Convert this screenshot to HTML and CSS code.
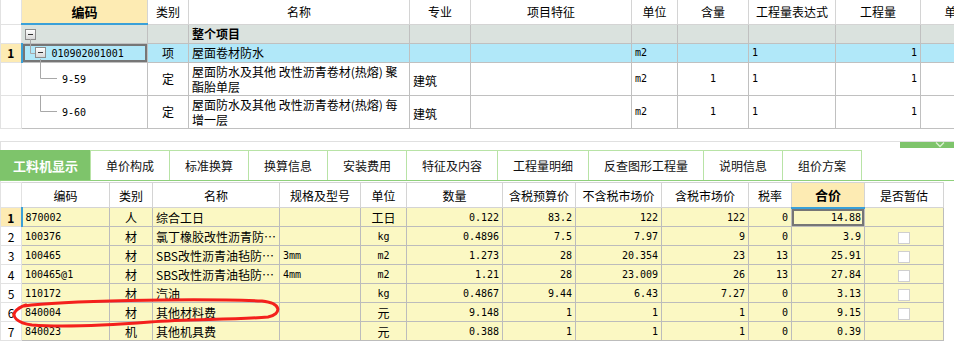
FILE: index.html
```html
<!DOCTYPE html>
<html lang="zh-CN">
  <head>
    <meta charset="UTF-8" />
    <meta name="viewport" content="width=device-width, initial-scale=1.0" />
    <title>分部分项</title>
    <link rel="stylesheet" href="styles.css">
  </head>

  <body>
    <section class="tree-grid">
      <table class="grid grid-top">
        <colgroup>
          <col style="width:21px" /><col style="width:126px" /><col style="width:41px" />
          <col style="width:221px" /><col style="width:61px" /><col style="width:161px" />
          <col style="width:46px" /><col style="width:71px" /><col style="width:87px" />
          <col style="width:85px" /><col style="width:60px" />
        </colgroup>
        <thead>
          <tr>
            <th class="num"></th>
            <th class="sorted">编码</th>
            <th>类别</th>
            <th>名称</th>
            <th>专业</th>
            <th>项目特征</th>
            <th>单位</th>
            <th>含量</th>
            <th>工程量表达式</th>
            <th>工程量</th>
            <th>单</th>
          </tr>
        </thead>
        <tbody>
          <tr class="row-group">
            <td class="num"></td>
            <td class="code lvl-0"><span class="toggle"></span></td>
            <td></td>
            <td class="bold">整个项目</td>
            <td></td><td></td><td></td><td></td><td></td><td></td><td></td>
          </tr>
          <tr class="row-item">
            <td class="num current">1</td>
            <td class="code lvl-1 picked"><span class="toggle"></span><span class="mono">010902001001</span></td>
            <td class="c">项</td>
            <td>屋面卷材防水</td>
            <td></td>
            <td></td>
            <td class="mono">m2</td>
            <td></td>
            <td class="mono">1</td>
            <td class="mono r">1</td>
            <td></td>
          </tr>
          <tr class="row-tall">
            <td class="num"></td>
            <td class="code lvl-2"><span class="mono">9-59</span></td>
            <td class="c">定</td>
            <td>屋面防水及其他 改性沥青卷材(热熔) 聚酯胎单层</td>
            <td class="low">建筑</td>
            <td></td>
            <td class="mono">m2</td>
            <td class="mono c">1</td>
            <td class="mono">1</td>
            <td class="mono r">1</td>
            <td></td>
          </tr>
          <tr class="row-tall">
            <td class="num"></td>
            <td class="code lvl-2"><span class="mono">9-60</span></td>
            <td class="c">定</td>
            <td>屋面防水及其他 改性沥青卷材(热熔) 每增一层</td>
            <td class="low">建筑</td>
            <td></td>
            <td class="mono">m2</td>
            <td class="mono c">1</td>
            <td class="mono">1</td>
            <td class="mono r">1</td>
            <td></td>
          </tr>
        </tbody>
      </table>
      <svg class="tree-lines" width="80" height="130" viewBox="0 0 80 130">
        <path d="M30.5 39 V53.5 H35 M40.5 59 V78.5 H57 M40.5 95 V111.5 H57" fill="none" stroke="#a8a8a8" stroke-width="1" />
      </svg>
    </section>

    <section class="panel">
      <div class="panel-bar">
        <span class="fold">
          <svg width="12" height="6" viewBox="0 0 12 6"><path d="M2 0.5 L6 4.5 L10 0.5" fill="none" stroke="#d9f0cf" stroke-width="1.4" /></svg>
        </span>
      </div>
      <nav class="tabs">
        <a class="tab active" style="width:91px">工料机显示</a>
        <a class="tab" style="width:80px">单价构成</a>
        <a class="tab" style="width:80px">标准换算</a>
        <a class="tab" style="width:80px">换算信息</a>
        <a class="tab" style="width:80px">安装费用</a>
        <a class="tab" style="width:92px">特征及内容</a>
        <a class="tab" style="width:92px">工程量明细</a>
        <a class="tab" style="width:116px">反查图形工程量</a>
        <a class="tab" style="width:80px">说明信息</a>
        <a class="tab" style="width:80px">组价方案</a>
      </nav>

      <div class="detail-wrap">
        <table class="grid grid-detail">
          <colgroup>
            <col style="width:21px" /><col style="width:88px" /><col style="width:43px" />
            <col style="width:127px" /><col style="width:81px" /><col style="width:46px" />
            <col style="width:96px" /><col style="width:73px" /><col style="width:86px" />
            <col style="width:87px" /><col style="width:43px" /><col style="width:73px" />
            <col style="width:79px" />
          </colgroup>
          <thead>
            <tr>
              <th class="num"></th>
              <th>编码</th>
              <th>类别</th>
              <th>名称</th>
              <th>规格及型号</th>
              <th>单位</th>
              <th>数量</th>
              <th>含税预算价</th>
              <th>不含税市场价</th>
              <th>含税市场价</th>
              <th>税率</th>
              <th class="sorted">合价</th>
              <th>是否暂估</th>
            </tr>
          </thead>
          <tbody>
            <tr>
              <td class="num current">1</td><td class="mono">870002</td><td class="c">人</td><td>综合工日</td><td></td>
              <td class="c">工日</td><td class="mono r">0.122</td><td class="mono r">83.2</td><td class="mono r">122</td>
              <td class="mono r">122</td><td class="mono r">0</td><td class="mono r picked">14.88</td><td></td>
            </tr>
            <tr>
              <td class="num">2</td><td class="mono">100376</td><td class="c">材</td><td>氯丁橡胶改性沥青防…</td><td></td>
              <td class="mono c">kg</td><td class="mono r">0.4896</td><td class="mono r">7.5</td><td class="mono r">7.97</td>
              <td class="mono r">9</td><td class="mono r">0</td><td class="mono r">3.9</td><td class="c"><span class="check"></span></td>
            </tr>
            <tr>
              <td class="num">3</td><td class="mono">100465</td><td class="c">材</td><td>SBS改性沥青油毡防…</td><td class="mono">3mm</td>
              <td class="mono c">m2</td><td class="mono r">1.273</td><td class="mono r">28</td><td class="mono r">20.354</td>
              <td class="mono r">23</td><td class="mono r">13</td><td class="mono r">25.91</td><td class="c"><span class="check"></span></td>
            </tr>
            <tr>
              <td class="num">4</td><td class="mono">100465@1</td><td class="c">材</td><td>SBS改性沥青油毡防…</td><td class="mono">4mm</td>
              <td class="mono c">m2</td><td class="mono r">1.21</td><td class="mono r">28</td><td class="mono r">23.009</td>
              <td class="mono r">26</td><td class="mono r">13</td><td class="mono r">27.84</td><td class="c"><span class="check"></span></td>
            </tr>
            <tr>
              <td class="num">5</td><td class="mono">110172</td><td class="c">材</td><td>汽油</td><td></td>
              <td class="mono c">kg</td><td class="mono r">0.4867</td><td class="mono r">9.44</td><td class="mono r">6.43</td>
              <td class="mono r">7.27</td><td class="mono r">0</td><td class="mono r">3.13</td><td class="c"><span class="check"></span></td>
            </tr>
            <tr>
              <td class="num">6</td><td class="mono">840004</td><td class="c">材</td><td>其他材料费</td><td></td>
              <td class="c">元</td><td class="mono r">9.148</td><td class="mono r">1</td><td class="mono r">1</td>
              <td class="mono r">1</td><td class="mono r">0</td><td class="mono r">9.15</td><td class="c"><span class="check"></span></td>
            </tr>
            <tr>
              <td class="num">7</td><td class="mono">840023</td><td class="c">机</td><td>其他机具费</td><td></td>
              <td class="c">元</td><td class="mono r">0.388</td><td class="mono r">1</td><td class="mono r">1</td>
              <td class="mono r">1</td><td class="mono r">0</td><td class="mono r">0.39</td><td></td>
            </tr>
          </tbody>
        </table>
        <!-- 手绘红圈标注 -->
        <svg class="mark" width="290" height="40" viewBox="0 0 290 40">
          <path d="M24 16 C60 11, 190 8, 262 11 C282 13, 282 24, 268 27 C230 30, 190 29, 150 32 C110 35, 60 37, 32 35 C16 33, 12 26, 15 22 C17 19, 20 17, 26 15"
                fill="none" stroke="#f4201c" stroke-width="3" stroke-linecap="round" />
        </svg>
      </div>
    </section>
  </body>
</html>
```

FILE: styles.css
```css
html {
  box-sizing: border-box;
  font-family: "Noto Sans CJK SC", sans-serif;
  font-size: 12px;
}

*,
*:before,
*:after {
  box-sizing: inherit;
}

body {
  margin: 0;
  width: 954px;
  height: 351px;
  overflow: hidden;
  background-color: #fff;
  color: #000;
}

.tree-grid {
  position: relative;
  overflow: hidden;
  height: 130px;
}

.grid {
  border-collapse: collapse;
  table-layout: fixed;
}

.grid th,
.grid td {
  border: 1px solid #c0c0c0;
  padding: 0 3px;
  line-height: 15px;
  white-space: nowrap;
  overflow: hidden;
  text-overflow: clip;
}

.grid th {
  font-weight: normal;
  text-align: center;
  background-color: #fff;
  border-color: #d4d4d4;
}

.grid-top {
  width: 980px;
  border-top: 0;
}

.grid-top thead th {
  height: 24px;
  border-top: 0;
}

.grid-top .row-group td,
.grid-top .row-item td {
  height: 19px;
}

.grid-top .row-tall td {
  height: 33px;
  white-space: normal;
  vertical-align: middle;
}

.grid-top .row-tall td.low {
  padding-top: 4px;
}

.grid .num {
  padding: 0;
  text-align: center;
  border-color: #e2e2e2;
  background-color: #fff;
}

.grid .num.current {
  font-weight: bold;
  background-color: #fdebb3;
  border-right: 2px solid #3aa0d8;
}

.grid th.sorted {
  font-weight: bold;
  font-size: 13px;
  background-color: #fdebb3;
  border-bottom: 2px solid #3aa0d8;
}

.row-group td {
  background-color: #dae2de;
}

.row-item td {
  background-color: #b1e8f9;
}

.grid td.picked {
  box-shadow: inset 0 0 0 2px #767676;
}

.grid .c {
  text-align: center;
}

.grid .r {
  text-align: right;
}

.bold {
  font-weight: bold;
}

.mono {
  font-family: "DejaVu Sans Mono", monospace;
  font-size: 10px;
}

.code {
  white-space: nowrap;
}

.code.lvl-0 {
  padding-left: 3px;
}

.code.lvl-1 {
  padding-left: 12px;
}

.code.lvl-2 {
  padding-left: 40px;
}

.toggle {
  display: inline-block;
  vertical-align: middle;
  width: 11px;
  height: 11px;
  margin-right: 6px;
  border: 1px solid #8c8c8c;
  background: linear-gradient(#fff, #d8d8d8);
  position: relative;
  top: -1px;
}

.toggle:after {
  content: "";
  position: absolute;
  left: 2px;
  right: 2px;
  top: 4px;
  height: 1px;
  background-color: #333;
}

.tree-lines {
  position: absolute;
  left: 0;
  top: 0;
  pointer-events: none;
}

/* panel inferior */
.panel {
  margin-top: 11px;
  border-top: 1px solid #e0e0e0;
  border-left: 1px solid #e0e0e0;
}

.panel-bar {
  height: 8px;
  display: flex;
  justify-content: flex-end;
  align-items: flex-start;
}

.fold {
  width: 54px;
  height: 6px;
  background-color: #7ec46b;
  display: flex;
  justify-content: flex-end;
  padding-right: 8px;
}

.fold svg {
  display: block;
}

.tabs {
  display: flex;
  height: 31px;
  border-bottom: 1px solid #8fd07b;
  margin-left: -1px;
}

.tab {
  display: flex;
  align-items: center;
  justify-content: center;
  height: 30px;
  border: 1px solid #b8e3a6;
  border-bottom: 0;
  margin-right: -1px;
  font-size: 12px;
  color: #111;
  text-decoration: none;
}

.tab.active {
  background-color: #7ec46b;
  border-color: #7ec46b;
  color: #fff;
  font-weight: bold;
  font-size: 13px;
}

.detail-wrap {
  position: relative;
  padding-top: 1px;
  margin-left: -1px;
}

.grid-detail {
  width: 944px;
}

.grid-detail thead th {
  height: 25px;
}

.grid-detail td {
  height: 19px;
  background-color: #fbf8c3;
  border-color: #bcbcbc;
}

.check {
  display: inline-block;
  width: 12px;
  height: 12px;
  border: 1px solid #cfcfcf;
  background-color: #fff;
  vertical-align: middle;
}

.mark {
  position: absolute;
  left: 0;
  top: 109px;
  pointer-events: none;
}
```
